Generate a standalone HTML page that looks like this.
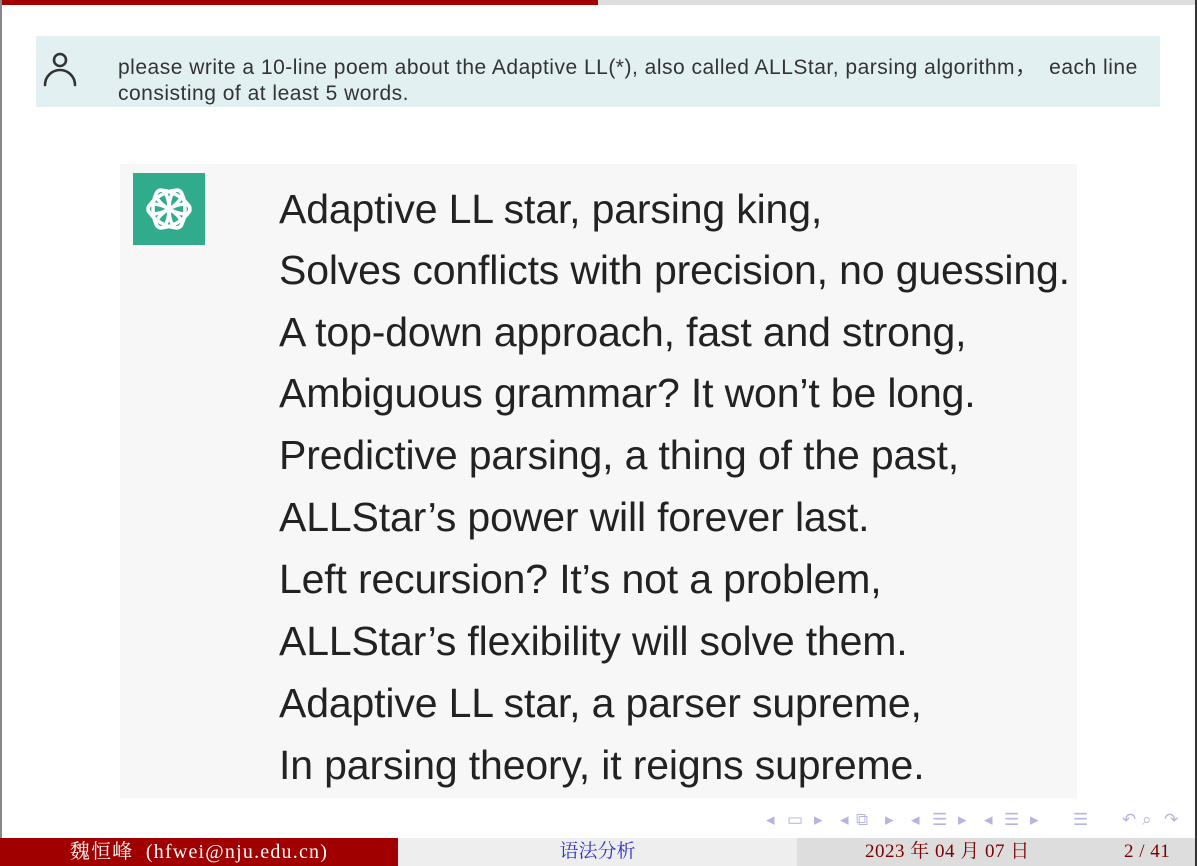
<!DOCTYPE html>
<html><head><meta charset="utf-8"><style>
*{margin:0;padding:0}
body{width:1197px;height:866px;position:relative;background:#fff;overflow:hidden;font-family:"Liberation Sans",sans-serif}
.abs{position:absolute}
.poem div{position:absolute;left:279px;font-size:41px;letter-spacing:-0.15px;color:#222;white-space:nowrap;line-height:1}
.nav span{position:absolute;top:0}
</style></head><body>
<div class="abs" style="left:0;top:0;width:598px;height:5px;background:#a00000"></div>
<div class="abs" style="left:598px;top:0;width:599px;height:5px;background:#ddd"></div>
<div class="abs" style="left:0;top:0;width:2px;height:838px;background:#888"></div>
<div class="abs" style="left:1195px;top:0;width:2px;height:866px;background:#333"></div>

<div class="abs" style="left:36px;top:36px;width:1124px;height:71px;background:#e3f0f2"></div>
<svg class="abs" style="left:40px;top:48px" width="40" height="42" viewBox="0 0 40 42"><circle cx="20" cy="12" r="6" fill="none" stroke="#333" stroke-width="2.6"/><path d="M5 37 A15 15 0 0 1 35 37" fill="none" stroke="#333" stroke-width="2.6" stroke-linecap="round"/></svg>
<div class="abs" style="left:118px;top:55px;font-size:21px;letter-spacing:0.5px;line-height:26px;color:#333;white-space:nowrap">please write a 10-line poem about the Adaptive LL(*), also called ALLStar, parsing algorithm，&nbsp; each line<br>consisting of at least 5 words.</div>

<div class="abs" style="left:120px;top:164px;width:957px;height:634px;background:#f7f7f8"></div>
<div class="abs" style="left:133px;top:173px;width:72px;height:72px;background:#19a37f;opacity:.9"></div>
<svg class="abs" style="left:133px;top:173px" width="72" height="72" viewBox="0 0 72 72"><g fill="none" stroke="#fff" stroke-width="3.5" transform="translate(36 36)">
<ellipse rx="8" ry="19" transform="rotate(0) translate(8 0)"/><ellipse rx="8" ry="19" transform="rotate(60) translate(8 0)"/><ellipse rx="8" ry="19" transform="rotate(120) translate(8 0)"/><ellipse rx="8" ry="19" transform="rotate(180) translate(8 0)"/><ellipse rx="8" ry="19" transform="rotate(240) translate(8 0)"/><ellipse rx="8" ry="19" transform="rotate(300) translate(8 0)"/></g></svg>

<div class="poem">
<div style="top:189px">Adaptive LL star, parsing king,</div>
<div style="top:250px">Solves conflicts with precision, no guessing.</div>
<div style="top:312px">A top-down approach, fast and strong,</div>
<div style="top:373px">Ambiguous grammar? It won’t be long.</div>
<div style="top:435px">Predictive parsing, a thing of the past,</div>
<div style="top:497px">ALLStar’s power will forever last.</div>
<div style="top:559px">Left recursion? It’s not a problem,</div>
<div style="top:621px">ALLStar’s flexibility will solve them.</div>
<div style="top:683px">Adaptive LL star, a parser supreme,</div>
<div style="top:745px">In parsing theory, it reigns supreme.</div>
</div>

<div class="abs nav" style="left:0;top:810px;font-size:17px;color:#b5b5de;white-space:nowrap;width:1197px;height:24px">
<span style="left:766px">◂</span><span style="left:787px">▭</span><span style="left:814px">▸</span>
<span style="left:840px">◂</span><span style="left:856px">⧉</span><span style="left:885px">▸</span>
<span style="left:911px">◂</span><span style="left:932px">☰</span><span style="left:958px">▸</span>
<span style="left:984px">◂</span><span style="left:1004px">☰</span><span style="left:1030px">▸</span>
<span style="left:1073px">☰</span>
<span style="left:1122px">↶</span><span style="left:1142px">⌕</span><span style="left:1164px">↷</span>
</div>

<div class="abs" style="left:0;top:838px;width:398px;height:28px;background:#a00000;color:#fff;font-family:'Liberation Serif','Noto Serif CJK SC',serif;font-size:20px;letter-spacing:1.2px;line-height:28px;text-align:center">魏恒峰 &nbsp;(hfwei@nju.edu.cn)</div>
<div class="abs" style="left:398px;top:838px;width:399px;height:28px;background:#eee;color:#3333cc;font-family:'Liberation Serif','Noto Serif CJK SC',serif;font-size:19px;line-height:28px;text-align:center">语法分析</div>
<div class="abs" style="left:797px;top:838px;width:398px;height:28px;background:#ddd;color:#7a0000;font-family:'Liberation Serif','Noto Serif CJK SC',serif;font-size:19px;letter-spacing:0.5px;line-height:28px"><span style="position:absolute;left:68px">2023 年 04 月 07 日</span><span style="position:absolute;left:327px">2 / 41</span></div>
</body></html>
